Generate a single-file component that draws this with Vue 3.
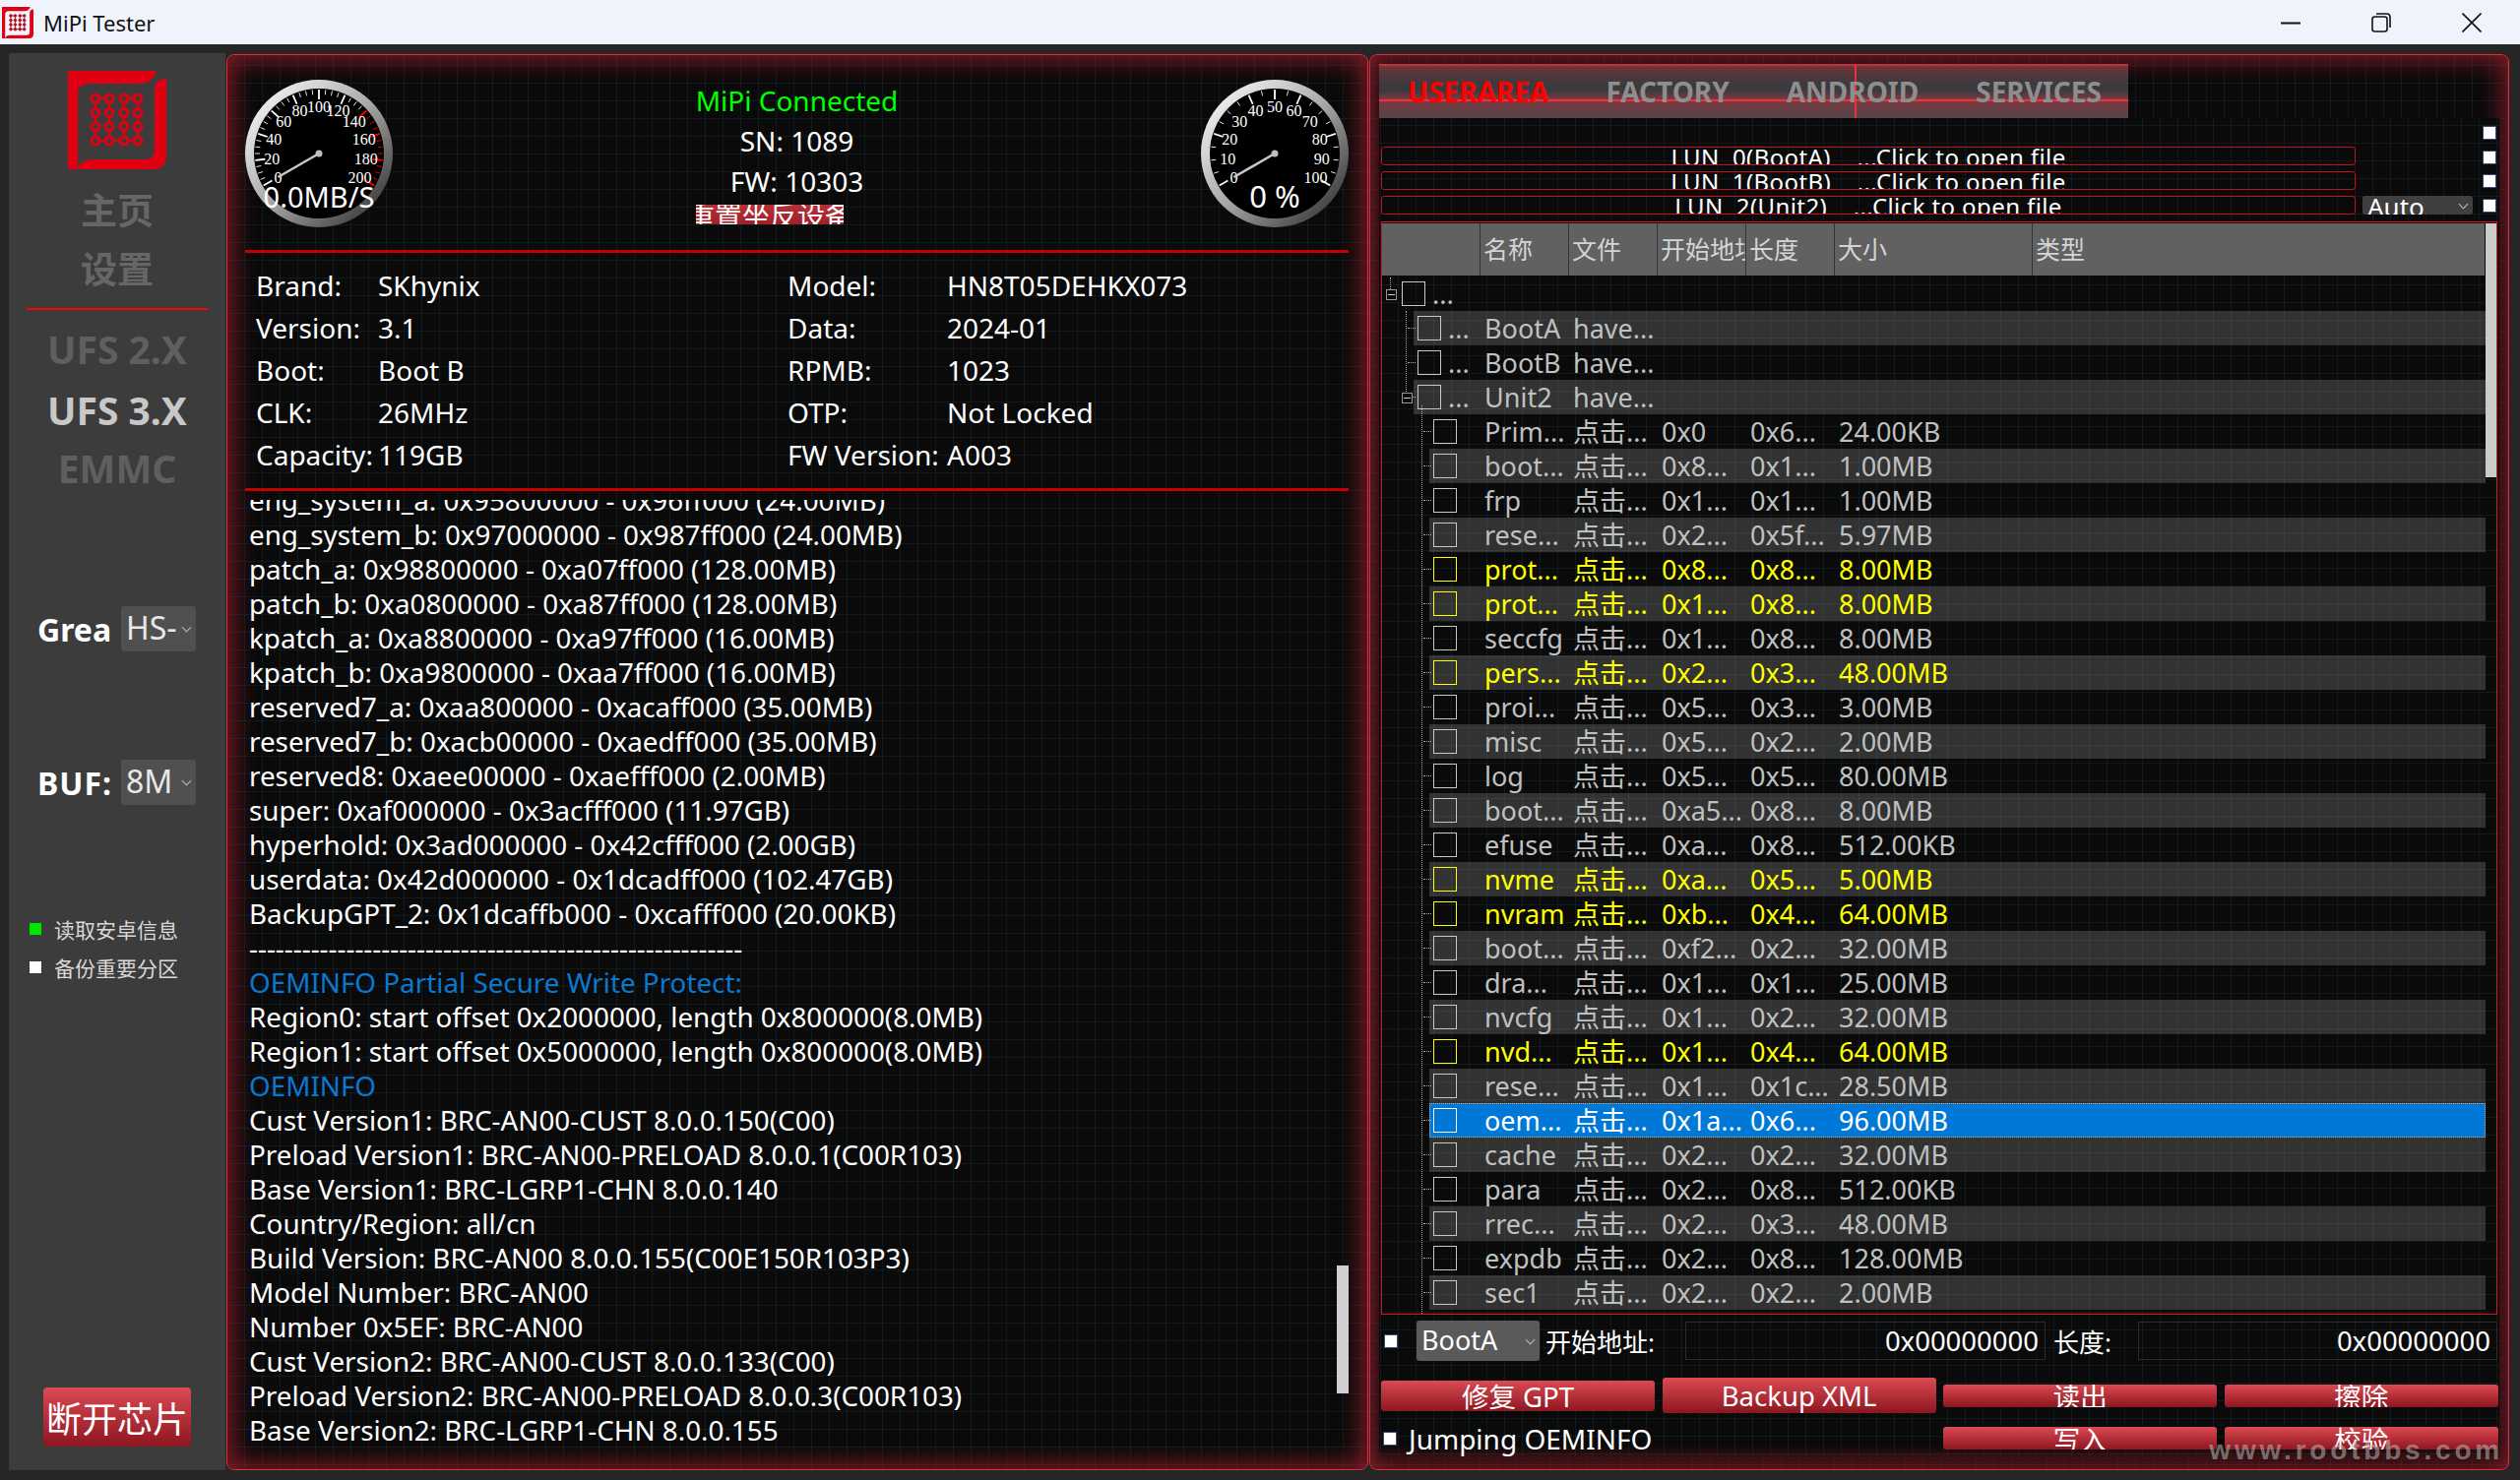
<template>
  <div class="app">
    <header class="titlebar">
      <svg class="title-icon" viewBox="0 0 100 100"><use href="#chip-logo" /></svg>
      <span class="title-text">MiPi Tester</span>
      <div class="win-btns">
        <button class="win-btn">
          <svg width="20" height="20" viewBox="0 0 20 20"><path d="M0 10.5H20" stroke="#111" stroke-width="2" /></svg>
        </button>
        <button class="win-btn">
          <svg width="20" height="20" viewBox="0 0 20 20" fill="none" stroke="#111" stroke-width="1.6">
            <rect x="1" y="4" width="15" height="15" rx="2.5" />
            <path d="M5 1H15.5Q19 1 19 4.500V15" />
          </svg>
        </button>
        <button class="win-btn">
          <svg width="20" height="20" viewBox="0 0 20 20"><path d="M0.500 0.500L19.500 19.500M19.500 0.500L0.500 19.500" stroke="#111" stroke-width="1.6" /></svg>
        </button>
      </div>
    </header>

    <main class="main">
      <aside class="sidebar">
        <svg class="logo" viewBox="0 0 100 100">
          <symbol id="chip-logo" viewBox="0 0 100 100">
            <path d="M0 0H90Q86 13 72 13H21Q10 13 10 24V100H0Z" fill="#e10012" />
            <path d="M100 8V86Q100 100 86 100H10Q13 90 25 90H78Q88 90 88 80V20Q88 8 100 8Z" fill="#e10012" />
            <g fill="none" stroke="#e10012">
              <path d="M28 28H42M57 28H71M28 28V71M42 28V71M57 28V71M71 28V71M28 71H42M42 71H71" stroke-width="2.500" />
              <circle v-for="dot in logoDots" :key="dot.key" :cx="dot.x" :cy="dot.y" r="4" stroke-width="3" fill="#3c3c3c" />
            </g>
          </symbol>
          <use href="#chip-logo" />
        </svg>
        <div class="nav-cn first">主页</div>
        <div class="nav-cn">设置</div>
        <div class="side-rule"></div>
        <div class="nav-chip c1">UFS 2.X</div>
        <div class="nav-chip c2 active">UFS 3.X</div>
        <div class="nav-chip c3">EMMC</div>

        <div class="side-field f1">
          <label>Grea</label>
          <div class="side-select">HS-<i class="chev"></i></div>
        </div>
        <div class="side-field f2">
          <label class="wide">BUF:</label>
          <div class="side-select">8M<i class="chev"></i></div>
        </div>

        <div class="side-check c-first"><i class="sq green"></i>读取安卓信息</div>
        <div class="side-check"><i class="sq"></i>备份重要分区</div>

        <button class="red-btn cut-btn">断开芯片</button>
      </aside>

      <section class="panel left">
        <div class="status">
          <svg v-for="g in gauges" :key="g.id" class="gauge" :class="g.id" viewBox="0 0 150 150">
            <defs>
              <linearGradient :id="'ring-' + g.id" x1="0.100" y1="0.100" x2="0.900" y2="0.900">
                <stop offset="0" stop-color="#f2f2f2" />
                <stop offset="0.500" stop-color="#a8a8a8" />
                <stop offset="1" stop-color="#3a3a3a" />
              </linearGradient>
            </defs>
            <circle cx="75" cy="75" r="75" :fill="'url(#ring-' + g.id + ')'" />
            <circle cx="75" cy="75" r="66" fill="#000" />
            <line
              v-for="t in g.ticks"
              :key="t.v"
              :x1="t.x1" :y1="t.y1" :x2="t.x2" :y2="t.y2"
              :stroke="t.color"
              :stroke-width="t.width"
            />
            <text
              v-for="l in g.labels"
              :key="l.v"
              class="g-label"
              :x="l.x" :y="l.y"
              text-anchor="middle"
              dominant-baseline="central"
            >{{ l.v }}</text>
            <line :x1="g.needle.x" :y1="g.needle.y" x2="75" y2="75" stroke="#c8c8c8" stroke-width="2.500" />
            <circle cx="75" cy="75" r="3.500" fill="#bdbdbd" />
            <text class="g-value" x="75" y="118" text-anchor="middle" dominant-baseline="central">{{ g.value }}</text>
          </svg>
          <div class="conn">
            <div class="conn-ok">MiPi Connected</div>
            <div class="conn-line">SN: 1089</div>
            <div class="conn-line">FW: 10303</div>
            <button class="red-btn reset-btn">重置坐反设备</button>
          </div>
        </div>
        <div class="rule"></div>
        <div class="info">
          <template v-for="row in infoRows" :key="row[0]">
            <span>{{ row[0] }}</span><span>{{ row[1] }}</span><span>{{ row[2] }}</span><span>{{ row[3] }}</span>
          </template>
        </div>
        <div class="rule"></div>
        <div class="log">
          <div v-for="(line, i) in logLines" :key="i" class="log-line" :class="{ blue: line.startsWith('OEMINFO') }">{{ line }}</div>
          <div class="log-thumb"></div>
        </div>
      </section>

      <section class="panel right">
        <div class="tabs">
          <span class="tab on">USERAREA</span>
          <span class="tab">FACTORY</span>
          <span class="tab">ANDROID</span>
          <span class="tab">SERVICES</span>
          <i class="tab-vline"></i>
        </div>
        <div class="rbody">
          <div class="luns">
            <div class="lun-col">
              <div class="lun-row"><div class="lun">LUN&nbsp; 0(BootA)&nbsp; &nbsp; ...Click to open file</div></div>
              <div class="lun-row"><div class="lun">LUN&nbsp; 1(BootB)&nbsp; &nbsp; ...Click to open file</div></div>
              <div class="lun-row">
                <div class="lun">LUN&nbsp; 2(Unit2)&nbsp; &nbsp; ...Click to open file</div>
                <div class="auto-select">Auto<i class="chev"></i></div>
              </div>
            </div>
            <div class="lun-checks">
              <i class="wbox"></i><i class="wbox"></i><i class="wbox"></i><i class="wbox"></i>
            </div>
          </div>

          <div class="tbl">
            <div class="tbl-main">
              <div class="thead">
                <span></span><span>名称</span><span>文件</span><span>开始地址</span><span>长度</span><span>大小</span><span>类型</span>
              </div>
              <div
                v-for="(r, i) in rows"
                :key="i"
                class="row"
                :class="['lv' + r.lv, { alt: i % 2 === 1, warn: r.warn, sel: r.sel }]"
              >
                <span class="tree-cell"><i class="cb"></i><span v-if="r.lv < 2" class="dots">...</span></span>
                <span class="cell">{{ r.name }}</span>
                <span class="cell">{{ r.file }}</span>
                <span class="cell">{{ r.start }}</span>
                <span class="cell">{{ r.len }}</span>
                <span class="cell">{{ r.size }}</span>
              </div>
              <i class="vdots d0"></i><i class="vdots d1"></i><i class="vdots d2"></i>
              <i class="minus m0"></i><i class="minus m1"></i>
            </div>
            <div class="tbl-scroll"><div class="tbl-thumb"></div></div>
          </div>

          <div class="addr">
            <i class="wbox addr-check"></i>
            <div class="boot-select">BootA<i class="chev"></i></div>
            <span class="addr-label">开始地址:</span>
            <div class="addr-input">0x00000000</div>
            <span class="addr-label len">长度:</span>
            <div class="addr-input">0x00000000</div>
          </div>

          <div class="actions">
            <button class="red-btn act h31">修复 GPT</button>
            <button class="red-btn act h36">Backup XML</button>
            <button class="red-btn act h23">读出</button>
            <button class="red-btn act h23">擦除</button>
            <div class="jump"><i class="wbox"></i>Jumping OEMINFO</div>
            <span></span>
            <button class="red-btn act h23">写入</button>
            <button class="red-btn act h23">校验</button>
          </div>
        </div>
        <div class="watermark">www.rootbbs.com</div>
      </section>
    </main>
  </div>
</template>

<script setup>
const logoDots = []
for (const y of [28, 42.5, 56.5, 71]) {
  for (const x of [28, 42, 57, 71]) {
    logoDots.push({ key: x + '-' + y, x, y })
  }
}

function polar(r, deg) {
  const a = (deg * Math.PI) / 180
  return { x: +(75 + r * Math.sin(a)).toFixed(2), y: +(75 - r * Math.cos(a)).toFixed(2) }
}

function makeGauge(id, max, labelStep, tickStep, isMajor, redFrom, value) {
  const ticks = []
  const labels = []
  for (let v = 0; v <= max; v += tickStep) {
    const deg = -120 + (240 * v) / max
    const major = isMajor(v)
    const inner = polar(major ? 55 : 60, deg)
    const outer = polar(65, deg)
    ticks.push({
      v,
      x1: inner.x,
      y1: inner.y,
      x2: outer.x,
      y2: outer.y,
      color: v >= redFrom ? '#ff0000' : '#ffffff',
      width: major ? 1.8 : 0.9,
    })
    if (v % labelStep === 0) {
      labels.push({ v, ...polar(48, deg) })
    }
  }
  return { id, ticks, labels, value, needle: polar(48, -120) }
}

const gauges = [
  makeGauge('speed', 200, 20, 5, (v) => v % 20 === 0, 140, '0.0MB/S'),
  makeGauge('progress', 100, 10, 5, (v) => v % 20 === 0 || v === 50, 999, '0 %'),
]

const infoRows = [
  ['Brand:', 'SKhynix', 'Model:', 'HN8T05DEHKX073'],
  ['Version:', '3.1', 'Data:', '2024-01'],
  ['Boot:', 'Boot B', 'RPMB:', '1023'],
  ['CLK:', '26MHz', 'OTP:', 'Not Locked'],
  ['Capacity:', '119GB', 'FW Version:', 'A003'],
]

const logLines = [
  'eng_system_a: 0x95800000 - 0x96ff000 (24.00MB)',
  'eng_system_b: 0x97000000 - 0x987ff000 (24.00MB)',
  'patch_a: 0x98800000 - 0xa07ff000 (128.00MB)',
  'patch_b: 0xa0800000 - 0xa87ff000 (128.00MB)',
  'kpatch_a: 0xa8800000 - 0xa97ff000 (16.00MB)',
  'kpatch_b: 0xa9800000 - 0xaa7ff000 (16.00MB)',
  'reserved7_a: 0xaa800000 - 0xacaff000 (35.00MB)',
  'reserved7_b: 0xacb00000 - 0xaedff000 (35.00MB)',
  'reserved8: 0xaee00000 - 0xaefff000 (2.00MB)',
  'super: 0xaf000000 - 0x3acfff000 (11.97GB)',
  'hyperhold: 0x3ad000000 - 0x42cfff000 (2.00GB)',
  'userdata: 0x42d000000 - 0x1dcadff000 (102.47GB)',
  'BackupGPT_2: 0x1dcaffb000 - 0xcafff000 (20.00KB)',
  '--------------------------------------------------------',
  'OEMINFO Partial Secure Write Protect:',
  'Region0: start offset 0x2000000, length 0x800000(8.0MB)',
  'Region1: start offset 0x5000000, length 0x800000(8.0MB)',
  'OEMINFO',
  'Cust Version1: BRC-AN00-CUST 8.0.0.150(C00)',
  'Preload Version1: BRC-AN00-PRELOAD 8.0.0.1(C00R103)',
  'Base Version1: BRC-LGRP1-CHN 8.0.0.140',
  'Country/Region: all/cn',
  'Build Version: BRC-AN00 8.0.0.155(C00E150R103P3)',
  'Model Number: BRC-AN00',
  'Number 0x5EF: BRC-AN00',
  'Cust Version2: BRC-AN00-CUST 8.0.0.133(C00)',
  'Preload Version2: BRC-AN00-PRELOAD 8.0.0.3(C00R103)',
  'Base Version2: BRC-LGRP1-CHN 8.0.0.155',
]

const CLICK = '点击...'
function part(name, start, len, size, extra = {}) {
  return { lv: 2, name, file: CLICK, start, len, size, ...extra }
}
const warn = { warn: true }

const rows = [
  { lv: 0, name: '', file: '', start: '', len: '', size: '' },
  { lv: 1, name: 'BootA', file: 'have...', start: '', len: '', size: '' },
  { lv: 1, name: 'BootB', file: 'have...', start: '', len: '', size: '' },
  { lv: 1, name: 'Unit2', file: 'have...', start: '', len: '', size: '' },
  part('Prim...', '0x0', '0x6...', '24.00KB'),
  part('boot...', '0x8...', '0x1...', '1.00MB'),
  part('frp', '0x1...', '0x1...', '1.00MB'),
  part('rese...', '0x2...', '0x5f...', '5.97MB'),
  part('prot...', '0x8...', '0x8...', '8.00MB', warn),
  part('prot...', '0x1...', '0x8...', '8.00MB', warn),
  part('seccfg', '0x1...', '0x8...', '8.00MB'),
  part('pers...', '0x2...', '0x3...', '48.00MB', warn),
  part('proi...', '0x5...', '0x3...', '3.00MB'),
  part('misc', '0x5...', '0x2...', '2.00MB'),
  part('log', '0x5...', '0x5...', '80.00MB'),
  part('boot...', '0xa5...', '0x8...', '8.00MB'),
  part('efuse', '0xa...', '0x8...', '512.00KB'),
  part('nvme', '0xa...', '0x5...', '5.00MB', warn),
  part('nvram', '0xb...', '0x4...', '64.00MB', warn),
  part('boot...', '0xf2...', '0x2...', '32.00MB'),
  part('dra...', '0x1...', '0x1...', '25.00MB'),
  part('nvcfg', '0x1...', '0x2...', '32.00MB'),
  part('nvd...', '0x1...', '0x4...', '64.00MB', warn),
  part('rese...', '0x1...', '0x1c...', '28.50MB'),
  part('oem...', '0x1a...', '0x6...', '96.00MB', { sel: true }),
  part('cache', '0x2...', '0x2...', '32.00MB'),
  part('para', '0x2...', '0x8...', '512.00KB'),
  part('rrec...', '0x2...', '0x3...', '48.00MB'),
  part('expdb', '0x2...', '0x8...', '128.00MB'),
  part('sec1', '0x2...', '0x2...', '2.00MB'),
]
</script>

<style>
html,
body {
  margin: 0;
  background: #262626;
}
</style>

<style scoped>
.app {
  width: 2560px;
  height: 1504px;
  display: flex;
  flex-direction: column;
  overflow: hidden;
  background: #262626;
  color: #fff;
  font-family: "Noto Sans", "Noto Sans CJK SC", sans-serif;
  font-size: 27px;
}
i {
  display: block;
  font-style: normal;
}
button {
  font-family: inherit;
  border: 0;
  padding: 0;
}

/* title bar */
.titlebar {
  height: 45px;
  flex: none;
  display: flex;
  align-items: center;
  background: #eff4fc;
  color: #111;
}
.title-icon {
  width: 32px;
  height: 32px;
  margin-left: 2px;
}
.title-text {
  margin-left: 10px;
  font-size: 22px;
}
.win-btns {
  margin-left: auto;
  margin-right: 3px;
  display: flex;
}
.win-btn {
  width: 92px;
  height: 45px;
  background: none;
  display: flex;
  align-items: center;
  justify-content: center;
}

.main {
  flex: 1;
  min-height: 0;
  display: grid;
  grid-template-columns: 220px 1160px 1158px;
  column-gap: 1px;
  padding: 9px 0 10px 9px;
}

/* sidebar */
.sidebar {
  background: #3c3c3c;
  display: flex;
  flex-direction: column;
  align-items: center;
}
.logo {
  width: 100px;
  height: 100px;
  margin-top: 18px;
  flex: none;
}
.nav-cn {
  font-size: 37px;
  font-weight: 700;
  line-height: 60px;
  color: #666;
}
.nav-cn.first {
  margin-top: 12px;
}
.side-rule {
  width: 184px;
  height: 2px;
  margin-top: 9px;
  background: #f00;
  flex: none;
}
.nav-chip {
  font-size: 39px;
  font-weight: 700;
  color: #5f5f5f;
}
.nav-chip.c1 {
  margin-top: 9px;
  line-height: 62px;
}
.nav-chip.c2 {
  line-height: 62px;
}
.nav-chip.c3 {
  line-height: 56px;
}
.nav-chip.active {
  color: #c8c8c8;
}
.side-field {
  align-self: stretch;
  padding-left: 29px;
  display: flex;
  align-items: center;
  height: 46px;
  flex: none;
}
.side-field.f1 {
  margin-top: 112px;
}
.side-field.f2 {
  margin-top: 110px;
}
.side-field label {
  width: 85px;
  font-size: 32px;
  font-weight: 700;
}
.side-field label.wide {
  letter-spacing: 1px;
}
.side-select {
  width: 76px;
  height: 46px;
  box-sizing: border-box;
  padding-left: 5px;
  position: relative;
  background: #505050;
  border-radius: 3px;
  line-height: 44px;
  font-size: 32px;
  color: #e8e8e8;
}
.chev {
  position: absolute;
  right: 6px;
  top: 50%;
  width: 6px;
  height: 6px;
  margin-top: -5px;
  border-right: 1px solid #bbb;
  border-bottom: 1px solid #bbb;
  transform: rotate(45deg);
}
.side-check {
  align-self: stretch;
  padding-left: 21px;
  display: flex;
  align-items: center;
  gap: 13px;
  height: 30px;
  margin-top: 9px;
  font-size: 21px;
  color: #d8d8d8;
  flex: none;
}
.side-check.c-first {
  margin-top: 111px;
}
.sq {
  width: 12px;
  height: 12px;
  background: #fff;
}
.sq.green {
  background: #00e600;
}
.red-btn {
  display: flex;
  align-items: center;
  justify-content: center;
  overflow: hidden;
  white-space: nowrap;
  color: #fff;
  background: linear-gradient(#dc4a52, #8d1620);
  border-radius: 4px;
}
.cut-btn {
  width: 150px;
  height: 60px;
  margin-top: auto;
  margin-bottom: 24px;
  font-size: 36px;
  flex: none;
}

/* panels */
.panel {
  position: relative;
  margin-top: 1px;
  box-sizing: border-box;
  min-width: 0;
  min-height: 0;
  display: flex;
  flex-direction: column;
  border: 1px solid #e42a3c;
  border-radius: 8px;
  background-color: #0a0a0a;
  background-image:
    linear-gradient(rgba(30, 90, 110, 0.2) 1px, transparent 1px),
    linear-gradient(90deg, rgba(30, 90, 110, 0.2) 1px, transparent 1px);
  background-size: 18px 18px;
  box-shadow: inset 0 0 24px 6px rgba(190, 35, 50, 0.62);
}
.panel.left {
  background-position: 17px 10px;
}

.status {
  height: 198px;
  flex: none;
  display: flex;
  padding: 25px 19px 0 18px;
  box-sizing: border-box;
}
.gauge {
  width: 150px;
  height: 150px;
  flex: none;
}
.gauge.speed {
  order: 0;
}
.gauge.progress {
  order: 2;
}
.g-label {
  font-family: "Liberation Serif", serif;
  font-size: 16px;
  fill: #fff;
}
.g-value {
  font-size: 29px;
  fill: #fff;
}
.gauge.progress .g-value {
  font-size: 31px;
}
.conn {
  order: 1;
  flex: 1;
  display: flex;
  flex-direction: column;
  align-items: center;
}
.conn-ok {
  color: #00ff00;
  line-height: 42px;
  font-size: 28px;
}
.conn-line {
  line-height: 41px;
  font-size: 28px;
}
.reset-btn {
  width: 150px;
  height: 20px;
  font-size: 28px;
  border-radius: 0;
  margin-top: 3px;
  margin-left: 308px;
  align-self: flex-start;
  flex: none;
  background: linear-gradient(#b8303a, #a02028);
}
.rule {
  height: 3px;
  margin: 0 19px 0 18px;
  background: #c40000;
  flex: none;
}
.info {
  height: 239px;
  box-sizing: border-box;
  flex: none;
  padding: 11px 0 0 29px;
  display: grid;
  grid-template-columns: 124px 416px 162px 1fr;
  grid-auto-rows: 43px;
  align-items: center;
  font-size: 28px;
}
.log {
  position: relative;
  flex: none;
  height: 963px;
  margin-top: 9px;
  padding-left: 22px;
  display: flex;
  flex-direction: column;
  justify-content: flex-end;
  overflow: hidden;
  font-size: 27.8px;
}
.log-line {
  height: 35px;
  line-height: 35px;
  white-space: nowrap;
  flex: none;
}
.log-line.blue {
  color: #0b78d0;
}
.log-thumb {
  position: absolute;
  right: 19px;
  bottom: 55px;
  width: 12px;
  height: 130px;
  background: #cfcfcf;
}

/* right panel */
.panel.right {
  padding: 9px 9px 10px 9px;
  background-position: 3px 10px;
}
.tabs {
  position: relative;
  width: 761px;
  height: 55px;
  flex: none;
  box-sizing: border-box;
  padding-left: 29px;
  display: flex;
  align-items: flex-start;
  gap: 58px;
  background: linear-gradient(
    #c8323e 0,
    #c8323e 1px,
    #6c343a 3px,
    #3c3a3e 20px,
    #3c3a3e 27px,
    #7a3a42 36px,
    #f5303e 36px,
    #f5303e 38px,
    #7a3a42 38px,
    #544448 55px
  );
}
.tab {
  position: relative;
  z-index: 1;
  font-size: 28px;
  font-weight: 700;
  line-height: 40px;
  margin-top: 8px;
  color: #8e8e8e;
}
.tab.on {
  color: #ff0000;
}
.tab-vline {
  position: absolute;
  left: 483px;
  top: 0;
  width: 2px;
  height: 55px;
  background: #e8303e;
}
.rbody {
  flex: 1;
  min-height: 0;
  position: relative;
  box-sizing: border-box;
  display: flex;
  flex-direction: column;
  padding: 8px 2px 0 2px;
  background-color: #0a0a0a;
  background-image:
    linear-gradient(rgba(30, 90, 110, 0.2) 1px, transparent 1px),
    linear-gradient(90deg, rgba(30, 90, 110, 0.2) 1px, transparent 1px);
  background-size: 18px 18px;
  background-position: 1px 7px;
  box-shadow: inset 0 -14px 12px -8px rgba(190, 35, 50, 0.35);
}
.luns {
  display: flex;
  align-items: flex-start;
  flex: none;
  height: 90px;
}
.lun-col {
  width: 1109px;
  padding-top: 21px;
  display: flex;
  flex-direction: column;
  gap: 6px;
}
.lun-row {
  display: flex;
  gap: 7px;
  height: 19px;
}
.lun {
  width: 990px;
  box-sizing: border-box;
  border: 1px solid #c80f1e;
  border-radius: 3px;
  overflow: hidden;
  text-align: center;
  white-space: nowrap;
  font-size: 24px;
  letter-spacing: 0.4px;
  line-height: 20px;
}
.auto-select {
  position: relative;
  width: 112px;
  height: 19px;
  overflow: hidden;
  padding-left: 5px;
  box-sizing: border-box;
  background: #3f3f3f;
  border-radius: 3px;
  font-size: 26px;
  line-height: 23px;
}
.lun-checks {
  margin-left: 10px;
  display: flex;
  flex-direction: column;
  gap: 10.7px;
}
.wbox {
  width: 14px;
  height: 14px;
  box-sizing: border-box;
  background: #fff;
  border: 1px solid #3a4a78;
  flex: none;
}

.tbl {
  margin-top: 7px;
  height: 1111px;
  flex: none;
  box-sizing: border-box;
  border: 1px solid #d8141f;
  display: flex;
  overflow: hidden;
}
.tbl-main {
  position: relative;
  width: 1121px;
  flex: none;
  padding-top: 1px;
}
.thead {
  width: 1120px;
  height: 53px;
  margin-bottom: 1px;
  background: #616161;
  display: grid;
  grid-template-columns: 100px 90px 90px 90px 90px 201px 1fr;
  font-size: 25px;
  color: #d4d4d4;
  line-height: 53px;
}
.thead span {
  box-sizing: border-box;
  padding-left: 3px;
  border-right: 1px solid #333;
  overflow: hidden;
  white-space: nowrap;
}
.thead span:last-child {
  border-right: 0;
}
.row {
  position: relative;
  height: 35px;
  display: grid;
  align-items: center;
  grid-template-columns: 100px 90px 90px 90px 90px 1fr;
  color: #c0c0c0;
  line-height: 35px;
  white-space: nowrap;
}
.row.lv1 {
  margin-left: 32px;
  grid-template-columns: 68px 90px 90px 90px 90px 1fr;
}
.row.lv2 {
  margin-left: 48px;
  grid-template-columns: 52px 90px 90px 90px 90px 1fr;
}
.row.alt {
  background: rgba(255, 255, 255, 0.165);
}
.row.warn {
  color: #ffff00;
}
.row.sel {
  color: #fff;
  background: #0078d7;
  outline: 1px dotted #e0a060;
  outline-offset: -1px;
}
.row.lv1::before,
.row.lv2::before {
  content: "";
  position: absolute;
  left: -6px;
  top: 17px;
  width: 8px;
  border-top: 1px dotted #aaa;
}
.tree-cell {
  display: flex;
  align-items: center;
  padding-left: 4px;
  gap: 7px;
}
.row.lv0 .tree-cell {
  padding-left: 20px;
}
.cb {
  width: 24px;
  height: 25px;
  box-sizing: border-box;
  border: 1px solid #c8c8c8;
  flex: none;
}
.row.warn .cb {
  border-color: #ffff00;
}
.row.sel .cb {
  border-color: #fff;
}
.dots {
  line-height: 35px;
}
.cell {
  padding-left: 4px;
}
.vdots {
  position: absolute;
  border-left: 1px dotted #aaa;
}
.vdots.d0 {
  left: 8px;
  top: 56px;
  height: 12px;
}
.vdots.d1 {
  left: 24px;
  top: 90px;
  height: 84px;
}
.vdots.d2 {
  left: 40px;
  top: 186px;
  bottom: 0;
}
.minus {
  position: absolute;
  width: 9px;
  height: 9px;
  border: 1px solid #999;
  background: #0a0a0a;
}
.minus::after {
  content: "";
  position: absolute;
  left: 1px;
  right: 1px;
  top: 4px;
  height: 1px;
  background: #ccc;
}
.minus.m0 {
  left: 4px;
  top: 68px;
}
.minus.m1 {
  left: 20px;
  top: 173px;
}
.tbl-scroll {
  width: 12px;
  flex: none;
  padding-top: 1px;
}
.tbl-thumb {
  height: 258px;
  background: #cbcbcb;
}

.addr {
  margin-top: 6px;
  height: 41px;
  flex: none;
  margin-left: -2px;
  display: grid;
  grid-template-columns: 38px 125px 148px 366px 94px 365px;
  align-items: center;
}
.addr-check {
  margin-left: 5px;
}
.boot-select {
  position: relative;
  height: 41px;
  box-sizing: border-box;
  padding-left: 5px;
  line-height: 39px;
  background: #5a5a5a;
  border-radius: 3px;
}
.addr-label {
  padding-left: 6px;
  font-size: 26px;
  white-space: nowrap;
}
.addr-label.len {
  padding-left: 8px;
}
.addr-input {
  height: 39px;
  box-sizing: border-box;
  border: 1px solid #2c2c2c;
  padding-right: 6px;
  line-height: 37px;
  text-align: right;
  font-size: 27.5px;
}
.actions {
  margin-top: 17px;
  flex: none;
  display: grid;
  grid-template-columns: repeat(4, 278px);
  column-gap: 7.6px;
  grid-template-rows: 36px 23px;
  row-gap: 14px;
  align-items: center;
}
.act {
  width: 278px;
  font-size: 27.5px;
  border-radius: 3px;
  background: linear-gradient(#dc4a52, #8d1620);
}
.h31 {
  height: 31px;
}
.h36 {
  height: 36px;
}
.h23 {
  height: 23px;
}
.jump {
  display: flex;
  align-items: center;
  gap: 12px;
  padding-left: 2px;
  height: 23px;
  white-space: nowrap;
  font-size: 28px;
}
.watermark {
  position: absolute;
  right: 5px;
  bottom: 5px;
  font-family: "Liberation Sans", sans-serif;
  font-size: 28px;
  font-weight: 700;
  line-height: 28px;
  letter-spacing: 3.8px;
  color: rgba(185, 185, 185, 0.55);
  white-space: nowrap;
}
</style>
